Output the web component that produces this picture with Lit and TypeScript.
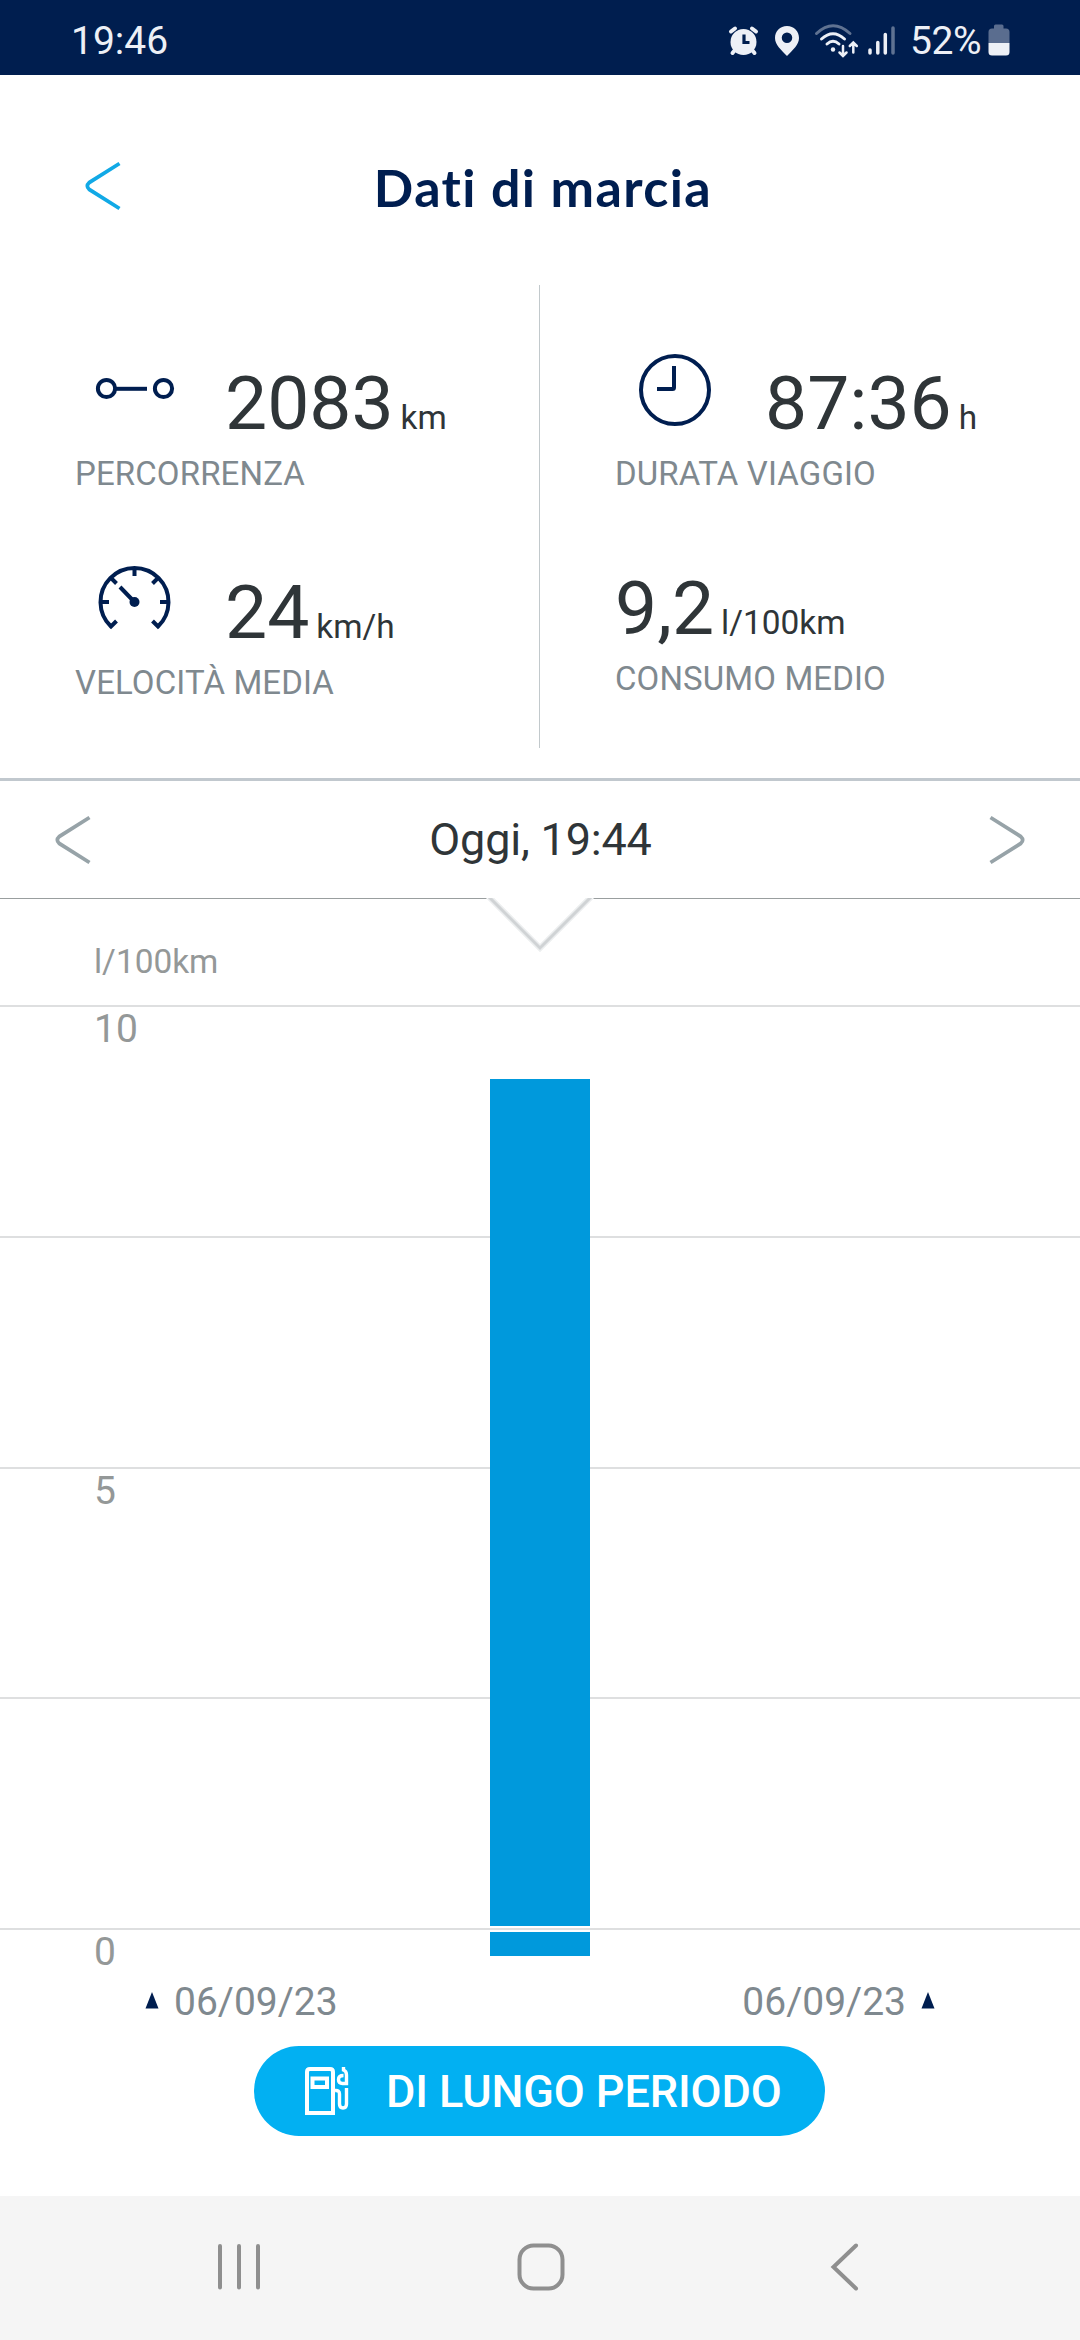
import { LitElement, html, css, svg } from "lit";
import { customElement, property } from "lit/decorators.js";

const chevron = html`<svg width="36" height="50" viewBox="0 0 36 50" fill="none" stroke="currentColor" stroke-width="3.8">
  <path d="M34.5 2.5 4.2 21.6Q0.5 25 4.2 28.4L34.5 47.5" />
</svg>`;

const distanceIcon = svg`<g stroke-width="4"><circle cx="10.5" cy="10.5" r="8.6"/><path d="M19 10.8H51"/><circle cx="67.5" cy="10.5" r="8.6"/></g>`;
const clockIcon = svg`<circle cx="36" cy="36" r="34"/><path d="M35 12V33.5Q35 35 33.5 35H18"/>`;
const speedIcon = svg`<path d="M17.5 55 12 60.5A34 34 0 1 1 59 60.5L53.5 55M35.5 2V10M2 36H10M61 36H69M11.5 11.5 17.5 17.5M59.500 11.5 53.500 17.500M35.500 36 21 21"/><circle class="dot" cx="35.500" cy="36" r="5"/>`;

@customElement("trip-stat")
class TripStat extends LitElement {
  @property() value = "";
  @property() unit = "";
  @property() label = "";

  static styles = css`
    :host { display: flex; flex-direction: column; }
    .row { display: flex; align-items: baseline; height: 88px; line-height: 88px; color: #2f3538; }
    .value { font-size: 75px; white-space: pre; }
    .unit { font-size: 33.4px; margin-left: 7px; }
    .label { font-size: 33px; letter-spacing: 0.12px; line-height: 40px; color: #7f898f; margin-top: 7px; white-space: nowrap; }
  `;

  render() {
    return html`<div class="row"><slot name="icon"></slot><span class="value">${this.value}</span><span class="unit">${this.unit}</span></div>
      <div class="label">${this.label}</div>`;
  }
}

@customElement("status-bar")
class StatusBar extends LitElement {
  static styles = css`
    :host { display: flex; justify-content: space-between; height: 75px; box-sizing: border-box; padding: 0 70px 0 71px; background: #001e4f; color: #edf0f6; font-size: 39px; line-height: 82px; }
    .right { display: flex; }
    .pct { letter-spacing: -0.5px; margin-left: 15px; }
    .bat { margin: 24px 0 0 7px; }
  `;

  render() {
    return html`<span class="time">19:46</span>
      <div class="right">
        <svg width="167" height="75" viewBox="728 0 167 75" fill="#edf0f6">
          <circle cx="743.5" cy="42" r="13"/>
          <g stroke="#edf0f6" stroke-width="4" stroke-linecap="round" fill="none">
            <path d="M731 31.500 735 28.500M756 31.500 752 28.500M735 50 732.500 53M752 50 754.500 53"/>
          </g>
          <path d="M744 34.500V42.500H749.500" fill="none" stroke="#001e4f" stroke-width="3.200"/>
          <path fill-rule="evenodd" d="M787 26C780 26 775 31.400 775 38C775 45 781 49.500 787 56C793 49.500 799 45 799 38C799 31.400 794 26 787 26ZM787 32.500A5.200 5.200 0 1 1 787 43A5.200 5.200 0 1 1 787 32.500Z"/>
          <g fill="none" stroke="#edf0f6" stroke-width="3" stroke-linecap="round">
            <path d="M816.500 33.500Q833 18 850 33.500" opacity=".4"/>
            <path d="M821.500 39Q833 28.500 844.500 39M827 44Q833 38.500 839 44"/>
            <path stroke-width="2.500" d="M843 46V55.500M839.500 52.500 843 56 846.500 52.500M853.300 52.500V43M849.800 46 853.300 42.500 856.800 46"/>
          </g>
          <circle cx="833" cy="49.500" r="2.200"/>
          <g stroke="#edf0f6" stroke-width="3.500" stroke-linecap="round">
            <path d="M870 50V53M877.800 42.500V53M885.300 34.500V53"/><path d="M893 28V53" opacity=".4"/>
          </g>
        </svg>
        <span class="pct">52%</span>
        <svg class="bat" width="22" height="32" viewBox="0 0 22 32" fill="#edf0f6">
          <path opacity=".38" d="M6 2Q6 .5 7.500 .5H14Q15.500 .5 15.500 2V4.500H18Q21.500 4.500 21.500 8V19H.5V8Q.5 4.500 4 4.500H6Z"/>
          <path d="M.5 19H21.500V28Q21.500 31.500 18 31.500H4Q.5 31.500 .5 28Z"/>
        </svg>
      </div>`;
  }
}

@customElement("consumption-chart")
class ConsumptionChart extends LitElement {
  @property({ type: Number }) value = 9.177;

  static styles = css`
    :host { display: block; position: relative; height: 1079px; box-sizing: border-box; padding-top: 41px; }
    .unit { height: 65px; line-height: 44px; padding-left: 94px; font-size: 33.4px; color: #949898; }
    .band { height: 230.75px; box-sizing: border-box; border-top: 2px solid #dedfe0; padding: 1px 0 0 94px; font-size: 39px; line-height: 42px; color: #949898; }
    .pointer { position: absolute; left: 486px; top: -1px; }
    .bar { position: absolute; left: 490px; width: 100px; bottom: 52px; background: #0099dc; }
    .stub { position: absolute; left: 490px; width: 100px; top: 1033px; height: 24px; background: #0099dc; }
  `;

  render() {
    return html`<div class="unit">l/100km</div>
      ${["10", "", "5", "", "0"].map((t) => html`<div class="band">${t}</div>`)}
      <svg class="pointer" width="108" height="55" viewBox="0 0 108 55" fill="none"><path d="M0 0H108L54 54Z" fill="#fff"/><path d="M3 -1 54 50 105 -1" stroke="#eceeef" stroke-width="6"/><path d="M3 -1 54 50 105 -1" stroke="#d0d3d5" stroke-width="3"/></svg>
      <div class="bar" style="height:${(this.value / 10) * 923}px"></div>
      <div class="stub"></div>`;
  }
}

@customElement("app-root")
class AppRoot extends LitElement {
  static styles = css`
    :host { display: flex; flex-direction: column; width: 1080px; height: 2340px; overflow: hidden; background: #fff; font-family: Roboto, sans-serif; }
    .header { height: 210px; display: grid; grid-template-columns: 120px 1fr 120px; box-sizing: border-box; padding-top: 77px; }
    .back { color: #11a9e6; margin: 9px 0 0 85px; }
    .title { margin: 0; padding-left: 6px; text-align: center; font: 700 52px/70px Lato, sans-serif; color: #001e50; letter-spacing: 1.4px; }
    .stats { height: 496px; display: grid; grid-template-columns: 539px 1fr; box-sizing: border-box; border-bottom: 3px solid #c1c8ce; }
    .col { display: flex; flex-direction: column; gap: 74px; padding: 74px 0 0 75px; height: 463px; box-sizing: border-box; }
    .right { border-left: 1px solid #c2c9cc; gap: 70px; }
    .icon { fill: none; stroke: #001e50; stroke-width: 4; flex: none; align-self: flex-start; overflow: visible; }
    .icon .dot { fill: #001e50; stroke: none; }
    .distance { margin: 19px 51px 0 21px; }
    .clock { margin: -5px 54px 0 24px; }
    .speed { margin: -2px 55px 0 24px; }
    .period { height: 118px; box-sizing: border-box; border-bottom: 1px solid #999e9f; display: flex; align-items: center; justify-content: space-between; padding: 0 55px; color: #97a3a8; }
    .period svg { display: block; }
    .next { transform: scaleX(-1); }
    .date { font-size: 45px; line-height: 54px; color: #2f3538; letter-spacing: -0.2px; padding-left: 1px; }
    .range { display: flex; justify-content: space-between; padding: 0 145px; height: 50px; line-height: 50px; font-size: 39px; color: #7f898f; margin-top: -1px; }
    .range div { display: flex; gap: 15px; }
    .range svg { margin-top: 15px; }
    .pill { margin: 19px 0 0 254px; width: 571px; height: 90px; border-radius: 45px; background: #02b0f2; color: #fff; display: flex; align-items: center; font-size: 45px; font-weight: 500; letter-spacing: -0.12px; box-sizing: border-box; padding-left: 50px; white-space: nowrap; }
    .pill svg { margin-right: 37px; }
    .nav { margin-top: auto; height: 144px; background: #f5f5f5; }
  `;

  render() {
    return html`<status-bar></status-bar>
      <div class="header"><div class="back">${chevron}</div><h1 class="title">Dati di marcia</h1></div>
      <div class="stats">
        <div class="col">
          <trip-stat value="2083" unit="km" label="PERCORRENZA"><svg slot="icon" class="icon distance" width="78" height="21">${distanceIcon}</svg></trip-stat>
          <trip-stat value="24" unit="km/h" label="VELOCITÀ MEDIA"><svg slot="icon" class="icon speed" width="71" height="64">${speedIcon}</svg></trip-stat>
        </div>
        <div class="col right">
          <trip-stat value="87:36" unit="h" label="DURATA VIAGGIO"><svg slot="icon" class="icon clock" width="72" height="72">${clockIcon}</svg></trip-stat>
          <trip-stat value="9,2" unit="l/100km" label="CONSUMO MEDIO"></trip-stat>
        </div>
      </div>
      <div class="period"><div>${chevron}</div><span class="date">Oggi, 19:44</span><div class="next">${chevron}</div></div>
      <consumption-chart></consumption-chart>
      <div class="range">
        <div><svg width="14" height="17"><path d="M7 0 13.500 16.500H.5Z" fill="#001e50"/></svg><span>06/09/23</span></div>
        <div><span>06/09/23</span><svg width="14" height="17"><path d="M7 0 13.500 16.500H.5Z" fill="#001e50"/></svg></div>
      </div>
      <div class="pill">
        <svg width="45" height="50" viewBox="0 0 45 50" fill="none" stroke="#fff" stroke-width="4">
          <path d="M3 47V6Q3 3 6 3H26Q29 3 29 6V47ZM8.500 12.500H23V21H8.500Z"/>
          <path stroke-width="3.400" d="M31 24.500Q35.500 24 35.500 28V38Q35.500 42 39 42Q42.500 42 42.500 38V22M39.500 1V4Q42.500 5 42.500 9V17.500H38.500Q34.500 17.500 34.500 13.500Q34.500 9.500 39.500 9.500"/>
        </svg><span>DI LUNGO PERIODO</span>
      </div>
      <div class="nav">
        <svg width="1080" height="144" fill="none" stroke="#8f8f8f" stroke-width="4" stroke-linecap="round">
          <path d="M220 50V91.500M239 50V91.500M258 50V91.500"/>
          <rect x="519.500" y="49.500" width="43" height="43" rx="14"/>
          <path d="M856 49.500 833.500 71 856 92.500"/>
        </svg>
      </div>`;
  }
}
